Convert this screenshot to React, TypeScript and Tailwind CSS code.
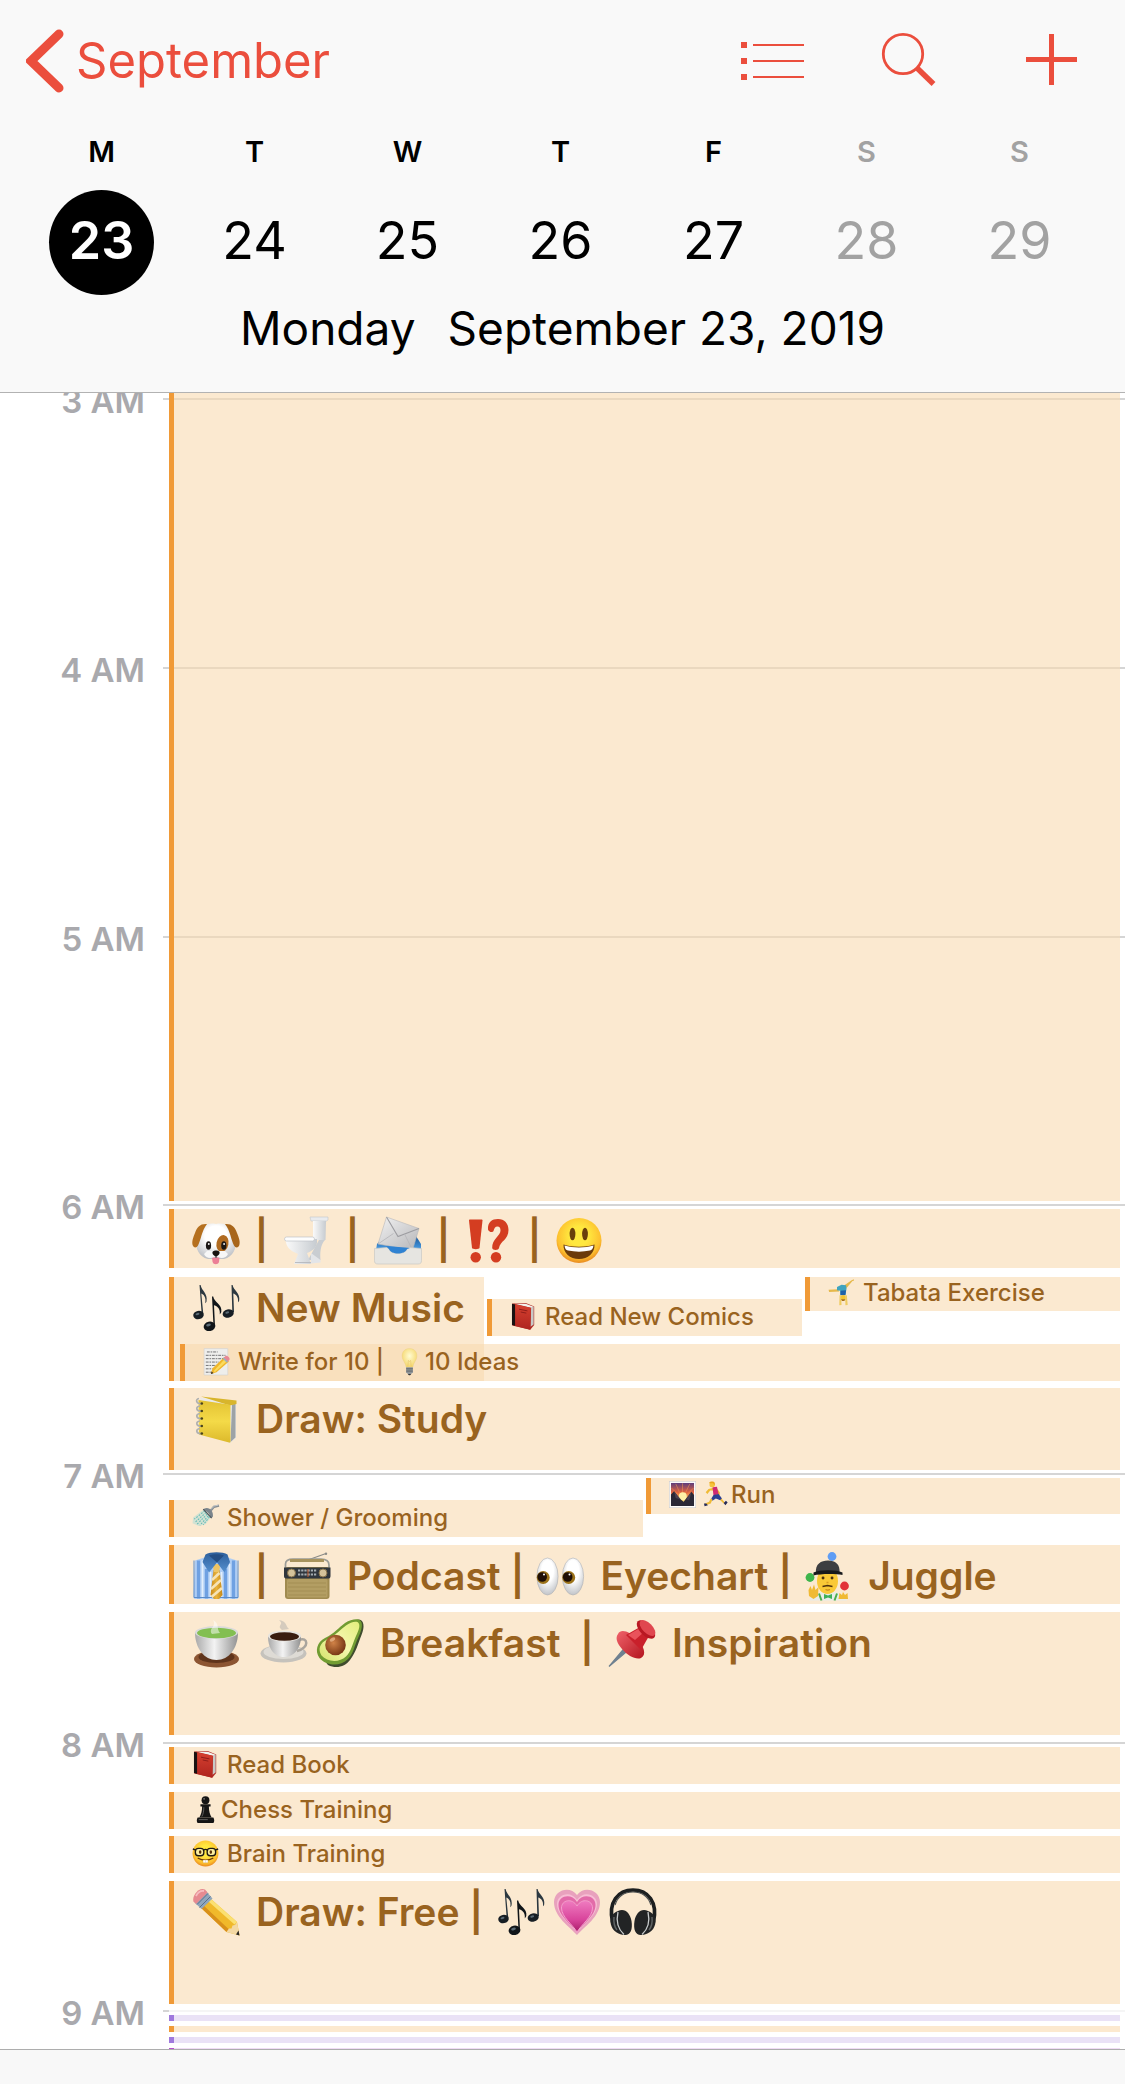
import type { ReactNode } from "react";

/* ---------- Emoji artwork, drawn on a 48 x 48 grid ---------- */

function Gradients() {
  return (
    <svg className="absolute size-0" aria-hidden="true">
      <defs>
        <radialGradient id="white3d" cx="0.5" cy="0.35" r="0.7">
          <stop offset="0.4" stopColor="#ffffff" />
          <stop offset="1" stopColor="#b9bcc1" />
        </radialGradient>
        <linearGradient id="bowl" x1="0" x2="1">
          <stop offset="0" stopColor="#a9a9a9" />
          <stop offset="0.45" stopColor="#f3f3f3" />
          <stop offset="1" stopColor="#929292" />
        </linearGradient>
        <linearGradient id="porcelain" x1="0" x2="1">
          <stop offset="0" stopColor="#fafafa" />
          <stop offset="1" stopColor="#c6cbd0" />
        </linearGradient>
        <radialGradient id="face" cx="0.5" cy="0.4" r="0.6">
          <stop offset="0.35" stopColor="#ffe83f" />
          <stop offset="0.8" stopColor="#fdc02f" />
          <stop offset="1" stopColor="#e98a20" />
        </radialGradient>
        <linearGradient id="page" x1="0" y1="0" x2="1" y2="1">
          <stop offset="0" stopColor="#f2f2f2" />
          <stop offset="1" stopColor="#b5b5b8" />
        </linearGradient>
        <linearGradient id="yellowCover" x1="0" y1="0" x2="0" y2="1">
          <stop offset="0" stopColor="#e3c233" />
          <stop offset="0.5" stopColor="#f4da48" />
          <stop offset="1" stopColor="#dcb92b" />
        </linearGradient>
        <linearGradient id="redCover" x1="0" y1="0" x2="0" y2="1">
          <stop offset="0" stopColor="#d6402f" />
          <stop offset="1" stopColor="#ae241f" />
        </linearGradient>
        <linearGradient id="tie" x1="0" y1="0" x2="1" y2="0">
          <stop offset="0" stopColor="#c98a1c" />
          <stop offset="0.5" stopColor="#e8b33c" />
          <stop offset="1" stopColor="#c58716" />
        </linearGradient>
        <linearGradient id="collar" x1="0" y1="0" x2="0" y2="1">
          <stop offset="0" stopColor="#2d5f9c" />
          <stop offset="1" stopColor="#5590cf" />
        </linearGradient>
        <radialGradient id="seed" cx="0.4" cy="0.4" r="0.6">
          <stop offset="0" stopColor="#d08247" />
          <stop offset="1" stopColor="#7a3a16" />
        </radialGradient>
        <linearGradient id="flesh" x1="1" y1="0" x2="0" y2="1">
          <stop offset="0" stopColor="#e2ee7c" />
          <stop offset="0.5" stopColor="#f5f7ae" />
          <stop offset="1" stopColor="#d3e36a" />
        </linearGradient>
        <linearGradient id="pink" x1="0" y1="0" x2="0" y2="1">
          <stop offset="0" stopColor="#ef7cc0" />
          <stop offset="0.6" stopColor="#d9459c" />
          <stop offset="1" stopColor="#a81c68" />
        </linearGradient>
        <linearGradient id="pinRed" x1="0" y1="0" x2="1" y2="1">
          <stop offset="0" stopColor="#f0626a" />
          <stop offset="1" stopColor="#b3151f" />
        </linearGradient>
        <linearGradient id="sky" x1="0" y1="0" x2="0" y2="1">
          <stop offset="0" stopColor="#5d3d7c" />
          <stop offset="0.4" stopColor="#e0633f" />
          <stop offset="0.8" stopColor="#ffdf74" />
        </linearGradient>
        <radialGradient id="bulb" cx="0.5" cy="0.4" r="0.6">
          <stop offset="0" stopColor="#fffbd2" />
          <stop offset="1" stopColor="#f5d66a" />
        </radialGradient>
        <linearGradient id="tray" x1="0" y1="0" x2="0" y2="1">
          <stop offset="0" stopColor="#174f8f" />
          <stop offset="1" stopColor="#4aa0e8" />
        </linearGradient>
      </defs>
    </svg>
  );
}

const NOTES = (
  <g>
    <path d="M7.5 1 8.6 1C9.5 7 16 9 14.5 17.5 13.9 18.6 13.5 19 13.2 19.2 14.5 13 11.5 10.500 9.300 9.500L11.300 30H9.700Z" fill="#2c3840" />
    <ellipse cx="6.500" cy="31" rx="5.300" ry="4.200" fill="#171e24" transform="rotate(-12 6.500 31)" />
    <path d="M39.500 1 40.600 1C41.500 6.500 48.500 9 47.200 16.500 46.700 17.500 46.400 18 46 18.200 46.800 12.500 43.500 10.300 41.300 9.500L42 28H40.300Z" fill="#2c3840" />
    <ellipse cx="36.200" cy="29.500" rx="5.600" ry="4.200" fill="#171e24" transform="rotate(-12 36.200 29.500)" />
    <path d="M20 12.500 21.200 12.500C22 18.500 30.500 20 29.300 28 28.500 29.600 28.200 30 27.800 30.200 28.500 24 24.500 22 22 21.300L23 42H21.500Z" fill="#101519" />
    <ellipse cx="17.500" cy="42.300" rx="5.900" ry="4.700" fill="#101519" transform="rotate(-12 17.500 42.300)" />
    <ellipse cx="16.500" cy="41" rx="2.400" ry="1.300" fill="#5b6b76" transform="rotate(-15 16.500 41)" />
    <ellipse cx="5.500" cy="30" rx="2" ry="1.100" fill="#5b6b76" transform="rotate(-15 5.500 30)" />
    <ellipse cx="35.200" cy="28.500" rx="2" ry="1.100" fill="#5b6b76" transform="rotate(-15 35.200 28.500)" />
  </g>
);

const ART: Record<string, ReactNode> = {
  dog: (
    <g>
      <path d="M24 8C33 6 42 10 43.500 24 45 32 41 41 32 43H16C7 41 3 32 4.500 24 6 10 15 6 24 8Z" fill="url(#white3d)" />
      <path d="M15 8C8 7.500 5 11 3 17 1 22-.5 26 .8 29.500 2 32 4.500 32 6 29.500 9 24 9.500 15 15 8Z" fill="#b5701f" />
      <path d="M33 8C40 7.500 43 11 45 17 47 22 48.500 26 47.200 29.500 46 32 43.500 32 42 29.500 39 24 38.500 15 33 8Z" fill="#a8661b" />
      <ellipse cx="30.500" cy="27.500" rx="6" ry="8.500" fill="#b06b21" transform="rotate(12 30.500 27.500)" />
      <path d="M20 41.500H27.500L27 46C26 49 21.500 49 20.600 46Z" fill="#ec7f96" />
      <path d="M12 38C14 43 21 43 24 39.500 27 43 34 43 36 38L33 35H15Z" fill="#f7f7f7" />
      <ellipse cx="16.500" cy="29.500" rx="2.600" ry="4.300" fill="#1b1715" />
      <ellipse cx="31.800" cy="29.500" rx="2.600" ry="4.300" fill="#1b1715" />
      <circle cx="16.800" cy="28" r="0.900" fill="#fff" />
      <circle cx="32.100" cy="28" r="0.900" fill="#fff" />
      <path d="M20.500 36C21.500 34 26.500 34 27.500 36 28 38.500 25.500 40 24 40.500 22.500 40 20 38.500 20.500 36Z" fill="#17120f" />
      <path d="M24 40V42" stroke="#333" strokeWidth="1" />
    </g>
  ),
  toilet: (
    <g>
      <path d="M27 1H45V4L43.500 5H28Z" fill="#e9ebee" stroke="#c4c7cb" strokeWidth="0.600" />
      <path d="M30 5H43L42.500 24H30Z" fill="url(#porcelain)" />
      <path d="M36 24H42C37 29 37 38 37.500 44H25Z" fill="#c9cdd1" />
      <path d="M2.500 23H34C35 32 29 35 24 37L28 48H11L15 38C8 35 3 32 2.500 23Z" fill="url(#porcelain)" />
      <path d="M28 37 37.500 44V46.500L28 47.500Z" fill="#e3e5e8" />
      <rect x="1.500" y="21" width="30" height="4" rx="2" fill="#fdfdfd" stroke="#bfc3c8" strokeWidth="0.700" />
      <path d="M12 46.500H28" stroke="#b4b8bd" strokeWidth="0.900" />
    </g>
  ),
  mail: (
    <g>
      <path d="M3 28 10 20 41 18.500 47 28V34H2Z" fill="url(#tray)" />
      <path d="M12.500 1 45 12.500 38.500 34 4 28Z" fill="url(#page)" stroke="#b8b8bb" strokeWidth="0.600" />
      <path d="M12.500 1 24 20.500 45 12.500" fill="none" stroke="#9d9da1" strokeWidth="1.100" />
      <path d="M4 28 19.500 17.500M38.500 34 30.500 18" stroke="#b4b4b8" strokeWidth="0.800" />
      <path d="M0.500 32.500 13 31.500 15 33C17 39 31 39 33 33L35.500 31.500 47.500 32.500V44.500C47.500 47 46.500 48 44 48H4C1.500 48 .5 47 .5 44.500Z" fill="#e6e5e1" stroke="#c9c8c4" strokeWidth="0.700" />
      <path d="M12 30 15 33C17 39 31 39 33 33L36 32 31 31.500Z" fill="#2f82d2" />
    </g>
  ),
  interrobang: (
    <g fill="#d43d21">
      <path d="M4 4.500C4 3.800 4.300 3.500 5 3.500H16.500C17.200 3.500 17.500 3.800 17.500 4.500L14.500 32C14.300 33.500 7.200 33.500 7 32Z" />
      <circle cx="10.700" cy="41.200" r="5.200" />
      <path d="M23 13.500C22.500 6 27 3 33 3 39.500 3 43.500 7.500 43.500 14 43.500 24 35 25 34 32 33.800 34.500 27.300 34.500 27.200 32 26.800 23 35.500 20 35.500 14.500 35.500 12 34.500 10.500 32.500 10.500 30 10.500 29.300 12.500 28.500 15 27.500 17 23.500 16 23 13.500Z" />
      <circle cx="31" cy="41.200" r="5.200" />
    </g>
  ),
  smile: (
    <g>
      <circle cx="23" cy="24.500" r="22.500" fill="url(#face)" />
      <ellipse cx="16.500" cy="18" rx="2.900" ry="6.300" fill="#6a3f0c" />
      <ellipse cx="29" cy="18" rx="2.900" ry="6.300" fill="#6a3f0c" />
      <path d="M7.500 28.500C16 31.500 30 31.500 38.500 28.500 39 37 32 43 23 43 14 43 7 37 7.500 28.500Z" fill="#6b3b0b" />
      <path d="M8.500 29.500C16 32 30 32 37.500 29.500 37 33 35.500 34 34 34.500 27 36 19 36 12 34.500 10 34 9 33 8.500 29.500Z" fill="#fff" />
    </g>
  ),
  notes: NOTES,
  notebook: (
    <g>
      <path d="M8 3 42 6 44 8V43L38 48 36 47Z" fill="#e9e9e9" />
      <path d="M40 10 43.500 8V42.500L38.500 47Z" fill="#9da3a6" />
      <path d="M9 1.500 44.500 5.500V9L38 10.500Z" fill="#d8b52c" />
      <path d="M6.500 5 37 9.500C38 10 38.500 10.500 38.500 11.500V46.500C38.500 47.500 38 47.800 37 47.600L7 39.500Z" fill="url(#yellowCover)" />
      <g fill="none" stroke="#aeb0b0" strokeWidth="1.700">
        <path d="M10 8.500C4 9.500 3 4 7 3.500" />
        <path d="M10 16C4 17 3 11.500 8 11" />
        <path d="M10 23.500C4 24.500 3 19 8 18.500" />
        <path d="M10 31C4 32 3 26.500 8 26" />
        <path d="M10 38.500C4 39.500 3 34 8 33.500" />
      </g>
      <g fill="#4c4417">
        <circle cx="9.800" cy="8.500" r="1.300" />
        <circle cx="9.800" cy="16" r="1.300" />
        <circle cx="9.800" cy="23.500" r="1.300" />
        <circle cx="9.800" cy="31" r="1.300" />
        <circle cx="9.800" cy="38.500" r="1.300" />
      </g>
    </g>
  ),
  book: (
    <g>
      <path d="M4 1 28 0 43 6V39L36 47.500 4 40Z" fill="#b12b24" />
      <path d="M8 1.500 28 1.500 42 6.500 39 9Z" fill="#f2f2ee" />
      <path d="M37.500 8 42 6.500V38L36.500 42Z" fill="#c9c9c6" />
      <path d="M8 2 37 8.500 36 47.500 8 40.500Z" fill="url(#redCover)" />
      <path d="M3.500 1.500 9 2.500V40.500L3.500 39Z" fill="#191212" />
      <path d="M16 11 31 14M19 16 29 18" stroke="#8a1a17" strokeWidth="1.600" />
    </g>
  ),
  memo: (
    <g>
      <path d="M2 1H44V48H2Z" fill="#eeeeec" stroke="#d0d0ce" strokeWidth="1" />
      <g stroke="#6e6e70" strokeWidth="1.700" strokeDasharray="5 1.500 3 1.500">
        <path d="M7 7H26" />
        <path d="M5 13H40" />
        <path d="M5 19H38" />
        <path d="M5 25H28" />
        <path d="M5 31H23" />
        <path d="M5 37H17" />
        <path d="M5 43H14" />
      </g>
      <path d="M38 16 46 24 24 43 14 46 17 36Z" fill="#f0b62b" />
      <path d="M40 18 44 22 21 43 19 41Z" fill="#fbdb5e" />
      <path d="M36 18 40 14C43 12 49 18 47 21L43.500 25Z" fill="#e98795" />
      <path d="M35 19 37 17 44.500 24 42.500 26Z" fill="#9fb0ba" />
      <path d="M14 46 15.200 41.500 18.500 44.700Z" fill="#3a2f22" />
    </g>
  ),
  bulb: (
    <g>
      <path d="M24 1C34 1 38 9 37 16 36 23 31 26 30 34H18C17 26 12 23 11 16 10 9 14 1 24 1Z" fill="url(#bulb)" stroke="#ead186" strokeWidth="0.800" />
      <path d="M21 33 22 22 24 24 26 22 27 33" fill="none" stroke="#e5c069" strokeWidth="1" />
      <path d="M18 34H30V43L26 47H22L18 43Z" fill="#8f9598" />
      <path d="M18 37H30M18 41H30" stroke="#54595c" strokeWidth="1.300" />
      <path d="M21 46H27L25 48.500H23Z" fill="#333" />
    </g>
  ),
  cartwheel: (
    <g>
      <path d="M1 19 18 18 20 22 2 23Z" fill="#e6b94b" />
      <path d="M29 11 42 2 46 .5V3L43.500 3.500 33 16Z" fill="#e6b94b" />
      <path d="M16 14 24 10 32 11 33 17 31 28H22L22 21 16 20Z" fill="#3fa4bf" />
      <path d="M22 21 32 20 31 29H22Z" fill="#2162a8" />
      <circle cx="27" cy="33" r="4.600" fill="#f4c42f" />
      <path d="M20.500 29 23.500 29 24 46 20 46.500Z" fill="#f0cc62" />
      <path d="M30.500 29 33.500 29 35 46 31 46.500Z" fill="#f0cc62" />
      <path d="M23 36H31L29 39H25Z" fill="#a87120" />
    </g>
  ),
  shower: (
    <g>
      <path d="M22 9 2 24 1 34 12 39 24 36 34 23Z" fill="#a9dcd6" opacity="0.500" />
      <g stroke="#5fb9b5" strokeWidth="1.800" strokeDasharray="3 2.500">
        <path d="M23 12 4 27" />
        <path d="M25 15 5 33" />
        <path d="M27 18 9 36" />
        <path d="M29 21 14 38" />
        <path d="M31 23 20 37" />
      </g>
      <path d="M22 8C30 4 39 12 37 23L33 25C32 18 28 12 20 11Z" fill="#7b858c" />
      <path d="M20 9 35 25" stroke="#4f585e" strokeWidth="2.200" />
      <path d="M33 12 39 5 48 3" fill="none" stroke="#868d92" strokeWidth="4" />
      <path d="M34 9 40 3.500 47 2" fill="none" stroke="#dce1e4" strokeWidth="1.200" />
    </g>
  ),
  sunrise: (
    <g>
      <rect x="0.500" y="0.500" width="47" height="47" fill="#fff" stroke="#c9ccd0" strokeWidth="1" />
      <rect x="3.500" y="3.500" width="41" height="41" fill="url(#sky)" />
      <path d="M23 30 12 5M24 30 24 4M25 30 37 5M22 30 4 12M26 30 44 12" stroke="#f8a14d" strokeWidth="1.200" opacity="0.700" />
      <circle cx="24.500" cy="27" r="7" fill="#fff2a6" />
      <path d="M3.500 24 9 18 15 26 21 33 26 37 33 28 40 19 44.500 25V44.500H3.500Z" fill="#2a2836" />
      <path d="M9 18 12 30 21 33ZM40 19 36 34 30 33Z" fill="#4b4252" />
    </g>
  ),
  runner: (
    <g>
      <path d="M17 12 8 14 3 20 6 23 11 17 18 17Z" fill="#f0bb35" />
      <path d="M24 14 28 20 28 25 24 27 20 22Z" fill="#f0bb35" />
      <path d="M15 11 23 10 26 23 17 26Z" fill="#cf2a72" />
      <path d="M17 25 26 23 32 31 29 34 21 31 15 35 13 31Z" fill="#2b3f94" />
      <path d="M31 31 37 38 35 40 29 34ZM15 33 12 40 3 43 2 40 9 37 12 31Z" fill="#f0bb35" />
      <path d="M35 39 39 35 42 38 38 43ZM0 40 4 40 7 43 1 45Z" fill="#252a59" />
      <circle cx="14.500" cy="6.500" r="4.800" fill="#f6c53d" />
      <path d="M9 4C9 0 18 0 19 3L19 8 16 4Z" fill="#e9a71f" />
    </g>
  ),
  shirt: (
    <g>
      <path d="M3 8.500 14 5H34L45 8.500 46.500 45C46.500 46.500 45.500 47 44.500 47H3.500C2.500 47 1.500 46.500 1.500 45Z" fill="#aecdf4" />
      <path d="M6.500 8.500V46.500M14.500 17V46.500M33.500 17V46.500M41.500 8.500V46.500" stroke="#6fa1e2" strokeWidth="3.200" />
      <path d="M10.500 8.500V46.500M18.500 20V46.500M29.500 20V46.500M37.500 12V46.500" stroke="#e3effd" strokeWidth="1.800" />
      <path d="M2 8.500V45.500H46V8.500" fill="none" stroke="#5b8cc9" strokeWidth="1" />
      <path d="M21.500 18H27.500L30.500 43 27 47H22L18.500 43Z" fill="url(#tie)" />
      <path d="M20 28 27.500 21M19 37 29 28M19.500 45 30 36" stroke="#f6e3b6" strokeWidth="2.600" />
      <path d="M20.500 12H28.500L27 20H22Z" fill="#edc463" />
      <path d="M13.500 2.500C18-.5 31-.5 35.500 2.500L38 10 32.500 20.500 25 10.500 17 20.500 10.500 10Z" fill="url(#collar)" />
      <path d="M17 3.500C21 1.800 28 1.800 32 3.500L25 10.500Z" fill="#254f85" />
    </g>
  ),
  radio: (
    <g>
      <path d="M22 9 43 1.500" stroke="#8a8a86" strokeWidth="1.100" />
      <circle cx="43" cy="1.700" r="1.200" fill="#8a8a86" />
      <path d="M2.500 20V12C2.500 8 6 7.200 10 7.200H38C43 7.200 46 9 46 13V20" fill="none" stroke="#9b9c97" strokeWidth="1.700" />
      <path d="M7 8.500H41" stroke="#a8935d" strokeWidth="3" />
      <rect x="2" y="15" width="44.500" height="32" rx="3" fill="#a08b50" />
      <rect x="4" y="27" width="40.500" height="18.500" rx="1.500" fill="#b39e63" />
      <path d="M5 31H43M5 35H43M5 39H43M5 43H43" stroke="#a38e55" strokeWidth="1" />
      <path d="M1 15.500H47.500V24C47.500 26 46.500 26.500 45 26.500H3.500C2 26.500 1 26 1 24Z" fill="#30363d" />
      <path d="M15 18.500H34M15 22.500H34" stroke="#a5adb2" strokeWidth="2.200" strokeDasharray="2.200 1" />
      <path d="M25 17V25" stroke="#c35d30" strokeWidth="1" />
      <circle cx="8.500" cy="21" r="4" fill="#d4c29a" stroke="#84704a" strokeWidth="1" />
      <circle cx="40" cy="21" r="4" fill="#d4c29a" stroke="#84704a" strokeWidth="1" />
    </g>
  ),
  eyes: (
    <g>
      <ellipse cx="11.500" cy="24.500" rx="10.600" ry="18.500" fill="url(#white3d)" stroke="#aeb0b3" strokeWidth="0.600" />
      <ellipse cx="37" cy="24.500" rx="10.600" ry="18.500" fill="url(#white3d)" stroke="#aeb0b3" strokeWidth="0.600" />
      <circle cx="7.200" cy="25.500" r="6.500" fill="#9c731a" />
      <circle cx="6.200" cy="25" r="4.800" fill="#1f0f06" />
      <circle cx="32.700" cy="25.500" r="6.500" fill="#9c731a" />
      <circle cx="31.700" cy="25" r="4.800" fill="#1f0f06" />
      <circle cx="8" cy="22.500" r="1" fill="#fff" />
      <circle cx="33.500" cy="22.500" r="1" fill="#fff" />
    </g>
  ),
  juggler: (
    <g>
      <circle cx="28" cy="4.500" r="4.400" fill="#5f9df4" />
      <circle cx="6" cy="25.500" r="4.400" fill="#3eb54b" />
      <circle cx="40.500" cy="34" r="4.400" fill="#e23237" />
      <path d="M5 48.500 8 43 18 40H30L40 43 43 48.500Z" fill="#e9ece8" />
      <path d="M15 41.500 17.500 48.500M33 41.500 30.500 48.500" stroke="#4cae4c" strokeWidth="2" />
      <ellipse cx="23.500" cy="29" rx="10.500" ry="13" fill="#fac937" />
      <path d="M19 26H19.100M28 26H28.100" stroke="#4a3010" strokeWidth="2.800" strokeLinecap="round" />
      <path d="M22.500 30.500H24.500" stroke="#d99a22" strokeWidth="1.500" />
      <path d="M18.500 34.500 23.500 33.500 28.500 34.500" fill="none" stroke="#4f310d" strokeWidth="1.400" />
      <path d="M21.500 37.500C23 38.200 24.500 38.200 26 37.500" fill="none" stroke="#c98a1d" strokeWidth="1.200" />
      <path d="M20 42 24 43.500 28 42V47L24 45.500 20 47Z" fill="#3fb158" />
      <path d="M12 21C11 12 17 8.500 24 8.500 31 8.500 36.500 12 35.500 21 28 19 20 19 12 21Z" fill="#3d3e41" />
      <path d="M9.500 20.500C16 17.500 32 17.500 38.500 20.500V23C32 21.500 16 21.500 9.500 23.500Z" fill="#18191b" />
      <path d="M4.500 38 6.500 34 8 38 10 32.500 11.500 38 14.500 35 14 44 9.500 47 5 44Z" fill="#f0ba34" />
      <path d="M34.500 47 35.500 41 38 43 39 40 41 43 43.500 41 44 47Z" fill="#f0ba34" />
    </g>
  ),
  tea: (
    <g>
      <ellipse cx="24.500" cy="40" rx="22.500" ry="8.500" fill="#8c5532" />
      <ellipse cx="24.500" cy="38" rx="18" ry="6" fill="#5f341b" />
      <path d="M3 13.500C3 29 12 41 24.500 41 37 41 46 29 46 13.500Z" fill="url(#bowl)" />
      <ellipse cx="24.500" cy="13.500" rx="21.500" ry="6.500" fill="#dadada" />
      <ellipse cx="24.500" cy="14" rx="19.500" ry="5.300" fill="#83bf52" />
      <path d="M20 15C16 9 25 8 21 1 28 5 24 9 28 14Z" fill="#fff" opacity="0.500" />
    </g>
  ),
  coffee: (
    <g>
      <ellipse cx="23.500" cy="34.500" rx="23" ry="9" fill="#c5c2bc" />
      <ellipse cx="23.500" cy="33" rx="20" ry="7" fill="#dedbd5" />
      <path d="M39 21C48 17 50 29 37 32" fill="none" stroke="#aaa59d" strokeWidth="2.500" />
      <path d="M8 17.500C8 28 13 38 24 38 35 38 41 28 41 17.500Z" fill="url(#bowl)" />
      <ellipse cx="24.500" cy="17" rx="16.500" ry="5.500" fill="#e7e4df" />
      <ellipse cx="24.500" cy="17.500" rx="14.500" ry="4.300" fill="#3a1d10" />
      <path d="M22 11C16 6 25 6 19 1 28 3 25 7 29 10Z" fill="#a6a6a6" opacity="0.450" />
    </g>
  ),
  avocado: (
    <g>
      <path d="M43 .5C48 1 49 8 45.500 16 42 25 40 33 34 41 29 48 20 50 12 46L8 41 34 2Z" fill="#3f4c2e" />
      <path d="M42.500 .5C48 2 46 11 42.500 18 38 27 38 34 32 40 24 48 10 47 3.500 39-1.500 32 1 23 9 19 19 14 22 9 29 4 34 .8 39-.3 42.500 .5Z" fill="#719c32" />
      <path d="M41.500 3C45 5 43 11 40 17 36 26 35.500 32 30 37.500 23 44 11 43 5.500 36.500 1.500 30 4 24 11 20.500 20 16 25 10 30 6.500 34 3.500 38.500 2 41.500 3Z" fill="url(#flesh)" />
      <circle cx="19.500" cy="26" r="10.300" fill="url(#seed)" />
      <ellipse cx="16.500" cy="20.500" rx="3" ry="1.700" fill="#e8b488" opacity="0.800" transform="rotate(-30 16.500 20.500)" />
    </g>
  ),
  pin: (
    <g>
      <path d="M1 47.500 17 28.500 20 31.500Z" fill="#6f8190" stroke="#6f8190" strokeWidth="1.200" />
      <path d="M10 15C13 9 22 13 29 20 36 27 39 36 33 39 28 41 20 37 14 30 9 24 7 19 10 15Z" fill="url(#pinRed)" />
      <path d="M18 16 32 8 41 17 33 31Z" fill="#c9202b" />
      <path d="M20 16 32 9 36 13 27 21Z" fill="#e9535b" />
      <ellipse cx="38" cy="10.500" rx="6" ry="11.500" fill="#b91823" transform="rotate(-45 38 10.500)" />
      <ellipse cx="39.500" cy="9" rx="5" ry="10" fill="#e0474f" transform="rotate(-45 39.500 9)" />
    </g>
  ),
  pawn: (
    <g fill="#151515">
      <circle cx="24" cy="7.500" r="7" />
      <path d="M15 14.500H33V18.500H30C30 27 32 33 35 38H13C16 33 18 27 18 18.500H15Z" />
      <path d="M10 38H38C40 41 40 46 38 48H10C8 46 8 41 10 38Z" />
      <path d="M21 20C21 27 20 32 17.500 36.500M12 42H28" fill="none" stroke="#6b6b6b" strokeWidth="1.500" />
      <circle cx="21.500" cy="5" r="1.600" fill="#7a7a7a" />
    </g>
  ),
  nerd: (
    <g>
      <circle cx="24" cy="24" r="23" fill="url(#face)" />
      <g fill="#fbf0a0" stroke="#1e1a14" strokeWidth="2.400">
        <rect x="6" y="15" width="15" height="13" rx="5.500" />
        <rect x="27" y="15" width="15" height="13" rx="5.500" />
      </g>
      <path d="M20.500 18C22.500 16.500 25.500 16.500 27.500 18M1.500 16 7 18M46.500 16 41 18" fill="none" stroke="#1e1a14" strokeWidth="2.400" />
      <ellipse cx="14.500" cy="21.500" rx="2.300" ry="3.200" fill="#5b350b" />
      <ellipse cx="33.500" cy="21.500" rx="2.300" ry="3.200" fill="#5b350b" />
      <path d="M11 32.500C18 37 30 37 37 32.500" fill="none" stroke="#6b3b0b" strokeWidth="2.400" strokeLinecap="round" />
      <path d="M19.500 35.500H28.500V40.500H19.500Z" fill="#fff" stroke="#c99a3a" strokeWidth="0.600" />
      <path d="M24 35.500V40.500" stroke="#bbb" strokeWidth="0.800" />
    </g>
  ),
  pencil: (
    <g>
      <path d="M15 7.500 45 34 47.500 47.500 34.500 44 6 17Z" fill="#f0b92b" />
      <path d="M15 7.500 45 34 42.500 36.500 12.500 10Z" fill="#fbe071" />
      <path d="M8.500 14.500 37 41.500 34.500 44 6 17Z" fill="#d8901b" />
      <path d="M34.500 44 37 40.500 39.500 40.500 40.500 37.500 43 37 45 34 47.500 47.500Z" fill="#f3d8a3" />
      <path d="M44 46.500 46.500 42.500 47.500 47.500Z" fill="#282521" />
      <path d="M14 3 20.500 10.500 9.500 21 2.500 14.500Z" fill="#8fa6bd" />
      <path d="M16 5.500 5 16.500M18.500 8.500 7.500 19.500" stroke="#58708a" strokeWidth="1" />
      <path d="M13 1.500 15.500 4.500 4 16 1.500 13.500C-.5 8 7-1.500 13 1.500Z" fill="#e68a90" />
      <path d="M4 8C6 4 9 2.500 12 3" fill="none" stroke="#f6bcc0" strokeWidth="1.800" />
    </g>
  ),
  heart: (
    <g>
      <path d="M24 47C17 39 1 29 1 14 1 2 17-3 24 7 31-3 47 2 47 14 47 29 31 39 24 47Z" fill="#e8a1bd" />
      <path d="M24 45C19 37 4 28 4 16 4 6 18 2 24 12 30 2 44 6 44 16 44 28 29 37 24 45Z" fill="#f7bdd4" />
      <path d="M24 44.500C19 37 5.500 28 5.500 17 5.500 8 18 4.500 24 14 30 4.500 42.500 8 42.500 17 42.500 28 29 37 24 44.500Z" fill="#e26ba9" />
      <path d="M24 44C20 37 8.500 29 8.500 20 8.500 12 19 9.500 24 18 29 9.500 39.500 12 39.500 20 39.500 29 28 37 24 44Z" fill="url(#pink)" stroke="#f49fcd" strokeWidth="1" />
    </g>
  ),
  headphones: (
    <g>
      <path d="M3.500 34C-1 14 9 2 24 2 39 2 49 14 44.500 34" fill="none" stroke="#1c1f20" strokeWidth="3.600" />
      <path d="M6 17C9 8 15 4 24 4 33 4 39 8 42 17" fill="none" stroke="#4c5051" strokeWidth="1.200" />
      <path d="M9 23C16 20 21 25 22.500 33 24 42 21 48 15 47 7 46 2 41 1.500 34 1.500 28 4 25 9 23Z" fill="#222425" />
      <path d="M39 23C32 20 27 25 25.500 33 24 42 27 48 33 47 41 46 46 41 46.500 34 46.500 28 44 25 39 23Z" fill="#222425" />
      <path d="M9 24C7 33 9 41 15 46.500M39 24C41 33 39 41 33 46.500" fill="none" stroke="#c7cbcc" strokeWidth="1.300" />
      <path d="M5 29C4.500 34 5.500 39 8 42M43 29C43.500 34 42.500 39 40 42" fill="none" stroke="#5f6364" strokeWidth="1.500" />
    </g>
  ),
};

function Emoji({ name, small = false, className = "" }: { name: string; small?: boolean; className?: string }) {
  return (
    <svg
      role="img"
      aria-label={name}
      viewBox="0 0 48 48"
      className={`shrink-0 overflow-visible ${small ? "size-[27px]" : "size-12"} ${className}`}
    >
      {ART[name]}
    </svg>
  );
}

/* ---------- Event blocks ---------- */

const EVENT = "flex items-start overflow-hidden whitespace-pre border-l-[5px] border-[#f09a37] bg-[#f8dab1]/60 text-[#99631f]";

function Big({ className, children }: { className: string; children?: ReactNode }) {
  return (
    <article className={`${EVENT} pt-[7px] pl-[18px] text-[39px] leading-12 font-semibold ${className}`}>{children}</article>
  );
}

function Small({ className, children }: { className: string; children?: ReactNode }) {
  return (
    <article className={`${EVENT} pl-[18px] text-[24px] leading-7 font-medium ${className}`}>{children}</article>
  );
}

function Pipe() {
  return <span className="w-[43px] shrink-0 text-center">|</span>;
}

/* ---------- Header ---------- */

const DAYS = [
  { letter: "M", day: 23, name: "Monday" },
  { letter: "T", day: 24, name: "Tuesday" },
  { letter: "W", day: 25, name: "Wednesday" },
  { letter: "T", day: 26, name: "Thursday" },
  { letter: "F", day: 27, name: "Friday" },
  { letter: "S", day: 28, name: "Saturday" },
  { letter: "S", day: 29, name: "Sunday" },
];

function Header() {
  return (
    <header className="border-b border-[#b2b2b2] bg-[#f9f9f9] pt-[26px] pb-8">
      <nav className="flex items-center justify-between pr-12 pl-[26px] text-[#eb4e3d]">
        <button type="button" className="flex items-center gap-3 text-[49px] leading-[70px]">
          <svg viewBox="0 0 38 64" className="h-16 w-[38px]" aria-hidden="true">
            <path d="M33 5 5 32 33 59" fill="none" stroke="currentColor" strokeWidth="9" strokeLinecap="round" strokeLinejoin="miter" />
          </svg>
          September
        </button>
        <div className="flex items-center pb-0.5">
          <button type="button" aria-label="List" className="mr-[78px]">
            <svg viewBox="0 0 63 52" className="h-[52px] w-[63px]" fill="currentColor">
              <path d="M0 8h6v6H0zM0 24h6v6H0zM0 40h6v6H0zM12 10h51v2H12zM12 26h51v2H12zM12 42h51v2H12z" />
            </svg>
          </button>
          <button type="button" aria-label="Search" className="mr-[91px]">
            <svg viewBox="0 0 53 52" className="h-[52px] w-[53px] overflow-visible" fill="none" stroke="currentColor">
              <circle cx="21" cy="20" r="19.700" strokeWidth="2.800" />
              <path d="M34.500 33.500 51.500 50" strokeWidth="5.500" />
            </svg>
          </button>
          <button type="button" aria-label="Add event">
            <svg viewBox="0 0 51 52" className="h-[52px] w-[51px]" fill="currentColor">
              <path d="M23 0h5v51h-5zM0 23h51v5H0z" />
            </svg>
          </button>
        </div>
      </nav>

      <div className="mt-9 grid grid-cols-7 pr-[29px] pl-[25px]">
        {DAYS.map((d, i) => (
          <div key={d.day} className={`flex flex-col items-center ${i > 4 ? "text-[#a2a2a2]" : "text-black"}`}>
            <span className="text-[29px] leading-10 font-semibold">{d.letter}</span>
            <button
              type="button"
              aria-label={`${d.name} ${d.day}`}
              className={`mt-[18px] flex size-[105px] items-center justify-center rounded-full pb-[3px] text-[52px] ${
                i === 0 ? "bg-black font-semibold text-white" : ""
              }`}
            >
              {d.day}
            </button>
          </div>
        ))}
      </div>

      <h1 className="mt-px flex justify-center gap-8 text-[46px] leading-[64px]">
        <span>Monday</span>
        <span>September 23, 2019</span>
      </h1>
    </header>
  );
}

/* ---------- Timeline ---------- */

const HOURS = ["3 AM", "4 AM", "5 AM", "6 AM", "7 AM", "8 AM", "9 AM"];

function HourGrid() {
  return (
    <div className="col-start-1 row-start-1 flex h-0 flex-col pt-[5px]">
      {HOURS.map((h, i) => (
        <div key={h} className={`flex shrink-0 items-start ${i % 3 === 2 ? "h-[268px]" : "h-[269px]"}`}>
          <span className="-mt-[13px] w-[145px] text-right text-[33px] leading-8 font-semibold text-[#a9a9ad]">{h}</span>
          <span className={`ml-[18px] h-[2px] bg-[#d5d5d5] ${i === 6 ? "w-[6px]" : "flex-1"}`} />
          {i === 6 && <span className="h-[2px] flex-1 bg-[#f5f5f5]" />}
        </div>
      ))}
    </div>
  );
}

function Events() {
  return (
    <div className="col-start-1 row-start-1 mr-[5px] ml-[169px] flex flex-col">
      <Big className="h-[808px]" />
      <Big className="mt-2 h-[59px]">
        <Emoji name="dog" />
        <Pipe />
        <Emoji name="toilet" />
        <Pipe />
        <Emoji name="mail" />
        <Pipe />
        <Emoji name="interrobang" />
        <Pipe />
        <Emoji name="smile" />
      </Big>

      <div className="mt-[9px] grid grid-cols-3 grid-rows-[67px_37px] gap-x-[3px]">
        <Big className="col-start-1 row-span-2 row-start-1">
          <Emoji name="notes" />
          <span className="ml-4">New Music</span>
        </Big>
        <Small className="col-start-2 row-start-1 mt-[22px] h-[37px] pt-1">
          <Emoji small name="book" />
          <span className="ml-2">Read New Comics</span>
        </Small>
        <Small className="col-start-3 row-start-1 h-[34px] pt-0.5">
          <Emoji small name="cartwheel" />
          <span className="ml-2">Tabata Exercise</span>
        </Small>
        <Small className="col-span-3 col-start-1 row-start-2 ml-[11px] pt-1">
          <Emoji small name="memo" />
          <span className="ml-2">Write for 10 |</span>
          <Emoji small name="bulb" className="ml-3" />
          <span className="ml-0.5">10 Ideas</span>
        </Small>
      </div>

      <Big className="mt-[7px] h-[82px]">
        <Emoji name="notebook" />
        <span className="ml-4">Draw: Study</span>
      </Big>

      <div className="mt-2 grid grid-cols-2 gap-x-[3px]">
        <Small className="mt-[22px] h-[37px] pt-1">
          <Emoji small name="shower" />
          <span className="ml-2">Shower / Grooming</span>
        </Small>
        <Small className="h-9 pt-[3px]">
          <Emoji small name="sunrise" />
          <Emoji small name="runner" className="ml-2" />
          <span>Run</span>
        </Small>
      </div>

      <Big className="mt-2 h-[59px]">
        <Emoji name="shirt" />
        <Pipe />
        <Emoji name="radio" />
        <span className="ml-4">Podcast |</span>
        <Emoji name="eyes" className="ml-3" />
        <span className="ml-4">Eyechart |</span>
        <Emoji name="juggler" className="ml-3" />
        <span className="ml-4">Juggle</span>
      </Big>
      <Big className="mt-2 h-[123px]">
        <Emoji name="tea" />
        <Emoji name="coffee" className="ml-5" />
        <Emoji name="avocado" className="ml-2" />
        <span className="ml-4">Breakfast  |</span>
        <Emoji name="pin" className="ml-3.5" />
        <span className="ml-4">Inspiration</span>
      </Big>

      <Small className="mt-3 h-[37px] pt-1">
        <Emoji small name="book" />
        <span className="ml-2">Read Book</span>
      </Small>
      <Small className="mt-2 h-[37px] pt-1">
        <Emoji small name="pawn" />
        <span className="ml-0.5">Chess Training</span>
      </Small>
      <Small className="mt-[7px] h-[37px] pt-1">
        <Emoji small name="nerd" />
        <span className="ml-2">Brain Training</span>
      </Small>
      <Big className="mt-2 h-[123px]">
        <Emoji name="pencil" />
        <span className="ml-4">Draw: Free |</span>
        <Emoji name="notes" className="ml-3.5" />
        <Emoji name="heart" className="ml-2" />
        <Emoji name="headphones" className="ml-2" />
      </Big>

      <div className="mt-[11px] flex flex-col gap-[5px]">
        <div className="h-1.5 border-l-[5px] border-[#9f79dd] bg-[#eae2f6]" />
        <div className="h-1.5 border-l-[5px] border-[#f09a37] bg-[#fce9cf]" />
        <div className="h-1.5 border-l-[5px] border-[#9f79dd] bg-[#eae2f6]" />
        <div className="h-px border-l-[5px] border-[#b54fd0] bg-[#f0dcf5]" />
      </div>
    </div>
  );
}

export default function App() {
  return (
    <div className="min-h-screen bg-[#f8f8f8] font-['Inter','Liberation_Sans',sans-serif] antialiased">
      <Gradients />
      <Header />
      <main className="grid grid-cols-1 overflow-hidden border-b border-[#adadad] bg-white">
        <HourGrid />
        <Events />
      </main>
      <footer className="h-[34px] bg-[#f8f8f8]" />
    </div>
  );
}
